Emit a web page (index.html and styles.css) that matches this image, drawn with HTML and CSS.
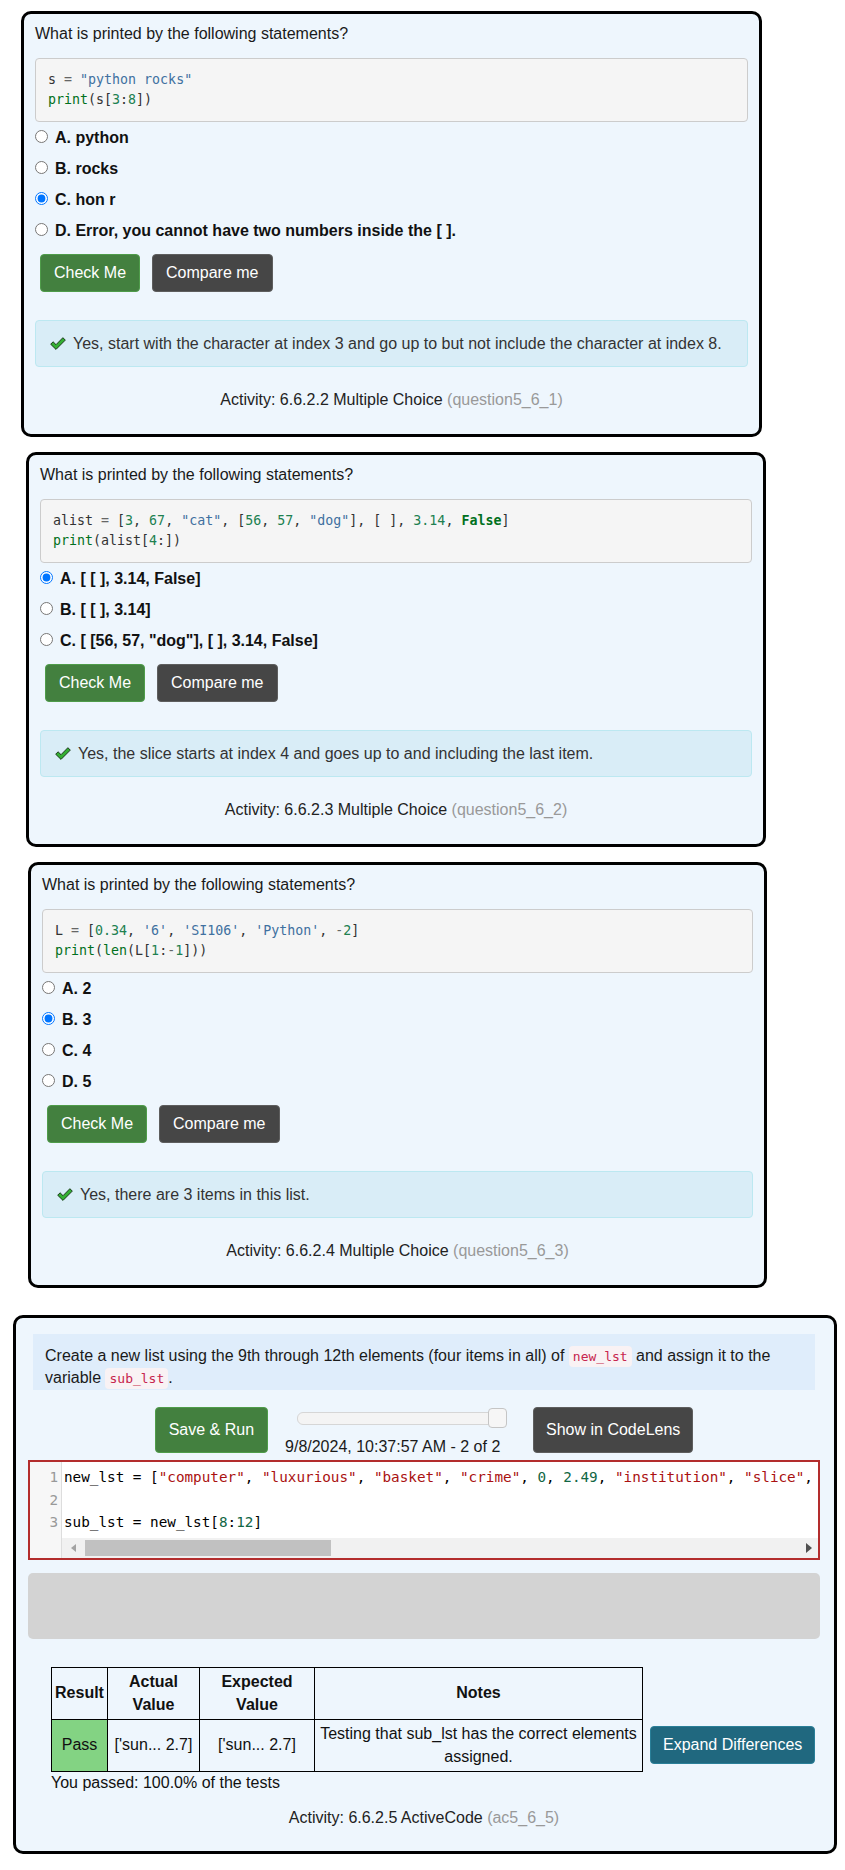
FILE: index.html
```html
<!DOCTYPE html>
<html lang="en">
<head>
<meta charset="utf-8">
<title>6.6.2 Slices</title>
<link rel="stylesheet" href="styles.css">
</head>
<body>
<main class="page">

  <section class="card card-mc card-first">
    <p class="question">What is printed by the following statements?</p>
    <pre class="code"><span class="tok-name">s</span> <span class="tok-op">=</span> <span class="tok-str">"python rocks"</span>
<span class="tok-builtin">print</span>(s[<span class="tok-num">3</span>:<span class="tok-num">8</span>])</pre>
    <div class="options">
      <label class="option"><input type="radio" name="q1"><span>A. python</span></label>
      <label class="option"><input type="radio" name="q1"><span>B. rocks</span></label>
      <label class="option"><input type="radio" name="q1" checked><span>C. hon r</span></label>
      <label class="option"><input type="radio" name="q1"><span>D. Error, you cannot have two numbers inside the [ ].</span></label>
    </div>
    <div class="actions">
      <button class="btn btn-check" type="button">Check Me</button>
      <button class="btn btn-compare" type="button">Compare me</button>
    </div>
    <div class="feedback">
      <svg class="check-icon" viewBox="0 0 16 13" aria-hidden="true"><polygon points="0.7,7.2 3.1,4.8 6,7.7 12.9,0.7 15.3,3.1 6,12.4" fill="#33b033" stroke="#1b3a1b" stroke-width="1" stroke-linejoin="round"/></svg>
      <span>Yes, start with the character at index 3 and go up to but not include the character at index 8.</span>
    </div>
    <p class="activity">Activity: 6.6.2.2 Multiple Choice <span class="activity-id">(question5_6_1)</span></p>
  </section>

  <section class="card card-mc card-second">
    <p class="question">What is printed by the following statements?</p>
    <pre class="code"><span class="tok-name">alist</span> <span class="tok-op">=</span> [<span class="tok-num">3</span>, <span class="tok-num">67</span>, <span class="tok-str">"cat"</span>, [<span class="tok-num">56</span>, <span class="tok-num">57</span>, <span class="tok-str">"dog"</span>], [ ], <span class="tok-num">3.14</span>, <span class="tok-kw">False</span>]
<span class="tok-builtin">print</span>(alist[<span class="tok-num">4</span>:])</pre>
    <div class="options">
      <label class="option"><input type="radio" name="q2" checked><span>A. [ [ ], 3.14, False]</span></label>
      <label class="option"><input type="radio" name="q2"><span>B. [ [ ], 3.14]</span></label>
      <label class="option"><input type="radio" name="q2"><span>C. [ [56, 57, "dog"], [ ], 3.14, False]</span></label>
    </div>
    <div class="actions">
      <button class="btn btn-check" type="button">Check Me</button>
      <button class="btn btn-compare" type="button">Compare me</button>
    </div>
    <div class="feedback">
      <svg class="check-icon" viewBox="0 0 16 13" aria-hidden="true"><polygon points="0.7,7.2 3.1,4.8 6,7.7 12.9,0.7 15.3,3.1 6,12.4" fill="#33b033" stroke="#1b3a1b" stroke-width="1" stroke-linejoin="round"/></svg>
      <span>Yes, the slice starts at index 4 and goes up to and including the last item.</span>
    </div>
    <p class="activity">Activity: 6.6.2.3 Multiple Choice <span class="activity-id">(question5_6_2)</span></p>
  </section>

  <section class="card card-mc card-third">
    <p class="question">What is printed by the following statements?</p>
    <pre class="code"><span class="tok-name">L</span> <span class="tok-op">=</span> [<span class="tok-num">0.34</span>, <span class="tok-str">'6'</span>, <span class="tok-str">'SI106'</span>, <span class="tok-str">'Python'</span>, <span class="tok-op">-</span><span class="tok-num">2</span>]
<span class="tok-builtin">print</span>(<span class="tok-builtin">len</span>(L[<span class="tok-num">1</span>:<span class="tok-op">-</span><span class="tok-num">1</span>]))</pre>
    <div class="options">
      <label class="option"><input type="radio" name="q3"><span>A. 2</span></label>
      <label class="option"><input type="radio" name="q3" checked><span>B. 3</span></label>
      <label class="option"><input type="radio" name="q3"><span>C. 4</span></label>
      <label class="option"><input type="radio" name="q3"><span>D. 5</span></label>
    </div>
    <div class="actions">
      <button class="btn btn-check" type="button">Check Me</button>
      <button class="btn btn-compare" type="button">Compare me</button>
    </div>
    <div class="feedback">
      <svg class="check-icon" viewBox="0 0 16 13" aria-hidden="true"><polygon points="0.7,7.2 3.1,4.8 6,7.7 12.9,0.7 15.3,3.1 6,12.4" fill="#33b033" stroke="#1b3a1b" stroke-width="1" stroke-linejoin="round"/></svg>
      <span>Yes, there are 3 items in this list.</span>
    </div>
    <p class="activity">Activity: 6.6.2.4 Multiple Choice <span class="activity-id">(question5_6_3)</span></p>
  </section>

  <section class="card card-code">
    <div class="task">Create a new list using the 9th through 12th elements (four items in all) of <code class="inline-code">new_lst</code> and assign it to the variable <code class="inline-code">sub_lst</code>.</div>

    <div class="controls">
      <button class="btn btn-run" type="button">Save &amp; Run</button>
      <div class="history">
        <div class="slider"><span class="slider-thumb"></span></div>
        <div class="history-date">9/8/2024, 10:37:57 AM - 2 of 2</div>
      </div>
      <button class="btn btn-codelens" type="button">Show in CodeLens</button>
    </div>

    <div class="editor">
      <div class="gutter">
        <div>1</div>
        <div>2</div>
        <div>3</div>
      </div>
      <div class="editor-main">
        <div class="editor-lines">
          <div class="cm-line">new_lst = [<span class="cm-str">"computer"</span>, <span class="cm-str">"luxurious"</span>, <span class="cm-str">"basket"</span>, <span class="cm-str">"crime"</span>, <span class="cm-num">0</span>, <span class="cm-num">2.49</span>, <span class="cm-str">"institution"</span>, <span class="cm-str">"slice"</span>, <span class="cm-str">"sun"</span>, [<span class="cm-str">"sandwich"</span>, <span class="cm-str">"tea"</span>], <span class="cm-str">"cake"</span>, <span class="cm-num">2.7</span>]</div>
          <div class="cm-line"> </div>
          <div class="cm-line">sub_lst = new_lst[<span class="cm-num">8</span>:<span class="cm-num">12</span>]</div>
        </div>
        <div class="hscroll">
          <span class="hscroll-left"><span class="arrow-left"></span></span>
          <span class="hscroll-thumb"></span>
          <span class="hscroll-right"><span class="arrow-right"></span></span>
        </div>
      </div>
    </div>

    <div class="output"></div>

    <div class="results">
      <table class="test-table">
        <colgroup>
          <col class="col-result">
          <col class="col-actual">
          <col class="col-expected">
          <col class="col-notes">
        </colgroup>
        <thead>
          <tr><th>Result</th><th>Actual Value</th><th>Expected Value</th><th>Notes</th></tr>
        </thead>
        <tbody>
          <tr><td class="pass">Pass</td><td>['sun... 2.7]</td><td>['sun... 2.7]</td><td>Testing that sub_lst has the correct elements assigned.</td></tr>
        </tbody>
      </table>
      <button class="btn btn-expand" type="button">Expand Differences</button>
    </div>
    <p class="passed">You passed: 100.0% of the tests</p>
    <p class="activity activity-code">Activity: 6.6.2.5 ActiveCode <span class="activity-id">(ac5_6_5)</span></p>
  </section>

</main>
</body>
</html>
```

FILE: styles.css
```css
* {
  box-sizing: border-box;
}

body {
  margin: 0;
  background: #ffffff;
  font-family: "Liberation Sans", Arial, sans-serif;
  font-size: 16px;
  color: #222222;
}

.page {
  padding: 11px 0 18px;
}

/* ---------- cards ---------- */
.card {
  border: 3px solid #000000;
  border-radius: 10px;
  background: #eef6fd;
}

.card-mc {
  padding: 9px 11px 23px;
}

.card-first {
  margin-left: 21px;
  width: 741px;
}

.card-second {
  margin: 15px 0 0 26px;
  width: 740px;
}

.card-third {
  margin: 15px 0 0 28px;
  width: 739px;
}

.card-code {
  margin: 27px 0 0 13px;
  width: 824px;
  padding: 16px 14px 22px 12px;
}

/* ---------- multiple choice ---------- */
.question {
  margin: 0 0 13px;
  line-height: 22px;
  color: #1a1a1a;
}

.code {
  margin: 0;
  padding: 11px 12px;
  background: #f5f5f5;
  border: 1px solid #cccccc;
  border-radius: 4px;
  font-family: "DejaVu Sans Mono", monospace;
  font-size: 13.3px;
  line-height: 20px;
  color: #333333;
  white-space: pre;
  overflow: hidden;
}

.tok-name { color: #333333; }
.tok-op { color: #666666; }
.tok-str { color: #4070a0; }
.tok-num { color: #208050; }
.tok-builtin { color: #007020; }
.tok-kw { color: #007020; font-weight: bold; }

.options {
  display: flex;
  flex-direction: column;
}

.option {
  display: flex;
  align-items: center;
  gap: 7px;
  height: 31px;
  font-weight: bold;
  color: #111111;
}

.option input {
  margin: 0 0 3px;
  width: 13px;
  height: 13px;
  flex: none;
}

.actions {
  display: flex;
  gap: 12px;
  margin: 8px 0 0 5px;
}

.btn {
  font-family: inherit;
  font-size: 16px;
  line-height: 22px;
  color: #ffffff;
  border: 1px solid transparent;
  border-radius: 4px;
  padding: 7px 13px;
  cursor: pointer;
  white-space: nowrap;
}

.btn-check,
.btn-run {
  background: #43803f;
  border-color: #4f9c4a;
}

.btn-compare,
.btn-codelens {
  background: #464646;
  border-color: #5e5e5e;
}

.feedback {
  display: flex;
  align-items: center;
  gap: 7px;
  margin-top: 28px;
  padding: 12px 14px;
  border: 1px solid #bce8f1;
  border-radius: 4px;
  background: #d9edf7;
  line-height: 21px;
  color: #333333;
}

.check-icon {
  width: 16px;
  height: 13px;
  flex: none;
}

.activity {
  margin: 22px 0 0;
  text-align: center;
  line-height: 22px;
  color: #222222;
}

.activity-id {
  color: #999999;
}

/* ---------- active code ---------- */
.task {
  margin: 0 5px;
  padding: 11px 12px 1px;
  background: #dfedfb;
  line-height: 22px;
  color: #1a1a1a;
}

.inline-code {
  font-family: "DejaVu Sans Mono", monospace;
  font-size: 13px;
  line-height: 1;
  color: #c7254e;
  background: #f9f2f4;
  border-radius: 4px;
  padding: 3px 4px;
}

.controls {
  display: flex;
  justify-content: center;
  align-items: flex-start;
  margin-top: 17px;
}

.btn-run {
  padding: 11px 13px;
  margin-right: 17px;
}

.btn-codelens {
  padding: 11px 12px;
  margin-left: 26px;
}

.history {
  display: flex;
  flex-direction: column;
  align-items: flex-start;
  width: 222px;
  margin-top: 1px;
}

.slider {
  position: relative;
  margin: 4px 0 0 12px;
  width: 208px;
  height: 13px;
  border: 1px solid #d6d6d6;
  border-radius: 6px;
  background: #f4f4f4;
}

.slider-thumb {
  position: absolute;
  right: -3px;
  top: -5px;
  width: 19px;
  height: 20px;
  border: 1px solid #c5c5c5;
  border-radius: 4px;
  background: #f6f6f6;
}

.history-date {
  margin-top: 11px;
  line-height: 22px;
  color: #1a1a1a;
  white-space: nowrap;
}

.editor {
  display: grid;
  grid-template-columns: 32px 1fr;
  margin-top: 2px;
  border: 2px solid #b32d2d;
  background: #ffffff;
}

.gutter {
  background: #f7f7f7;
  border-right: 1px solid #dddddd;
  padding: 4px 3px 0 0;
  font-family: "DejaVu Sans Mono", monospace;
  font-size: 14.3px;
  line-height: 22.5px;
  color: #999999;
  text-align: right;
}

.editor-main {
  min-width: 0;
  overflow: hidden;
}

.editor-lines {
  padding: 4px 0;
  font-family: "DejaVu Sans Mono", monospace;
  font-size: 14.3px;
  line-height: 22.5px;
  color: #000000;
  overflow: hidden;
}

.cm-line {
  padding-left: 2px;
  height: 22.5px;
  white-space: pre;
}

.cm-str { color: #aa1111; }
.cm-num { color: #116644; }

.hscroll {
  display: flex;
  align-items: center;
  height: 20px;
  background: #f1f1f1;
}

.hscroll-left {
  display: flex;
  justify-content: center;
  width: 23px;
}

.arrow-left {
  width: 0;
  height: 0;
  border-top: 4px solid transparent;
  border-bottom: 4px solid transparent;
  border-right: 5px solid #a3a3a3;
}

.hscroll-thumb {
  width: 246px;
  height: 16px;
  background: #c1c1c1;
}

.hscroll-right {
  display: flex;
  justify-content: center;
  width: 18px;
  margin-left: auto;
}

.arrow-right {
  width: 0;
  height: 0;
  border-top: 5px solid transparent;
  border-bottom: 5px solid transparent;
  border-left: 6px solid #505050;
}

.output {
  margin-top: 13px;
  height: 66px;
  background: #d3d3d3;
  border-radius: 5px;
}

.results {
  display: flex;
  align-items: flex-end;
  margin: 28px 0 0 23px;
}

.test-table {
  border-collapse: collapse;
  table-layout: fixed;
  width: 591px;
  flex: none;
}

.col-result { width: 56px; }
.col-actual { width: 92px; }
.col-expected { width: 115px; }
.col-notes { width: 328px; }

.test-table th,
.test-table td {
  border: 1px solid #000000;
  padding: 2px 3px 3px;
  line-height: 23px;
  text-align: center;
  vertical-align: middle;
  color: #111111;
}

.test-table th {
  font-weight: bold;
}

.test-table .pass {
  background: #83d383;
}

.btn-expand {
  background: #20687f;
  border-color: #2a7f98;
  padding: 7px 12px;
  margin: 0 0 8px 7px;
}

.passed {
  margin: 0 0 0 23px;
  line-height: 22px;
  color: #111111;
}

.activity-code {
  margin-top: 13px;
}
```
